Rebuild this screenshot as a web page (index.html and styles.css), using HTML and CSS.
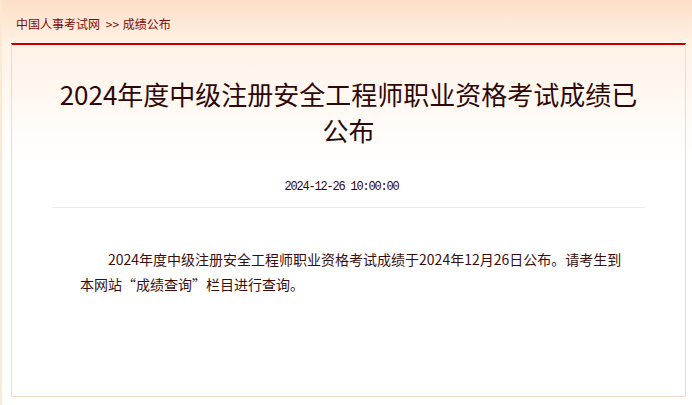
FILE: index.html
```html
<!DOCTYPE html>
<html lang="zh-CN">
<head>
  <meta charset="UTF-8">
  <meta name="viewport" content="width=device-width, initial-scale=1.0">
  <title>成绩公布</title>
  <link rel="stylesheet" href="styles.css">
</head>
<body>
  <div class="page">
    <div class="crumbs">
      <a href="#">中国人事考试网</a>
      <span class="sep">&gt;&gt;</span>
      <a href="#">成绩公布</a>
    </div>

    <div class="article">
      <div class="article-head">
        <h1>2024年度中级注册安全工程师职业资格考试成绩已公布</h1>
        <p class="date">2024-12-26 10:00:00</p>
      </div>

      <div class="article-body">
        <p>2024年度中级注册安全工程师职业资格考试成绩于2024年12月26日公布。请考生到本网站“成绩查询”栏目进行查询。</p>
      </div>
    </div>
  </div>
</body>
</html>
```

FILE: styles.css
```css
html, body {
  height: 100%;
}

body {
  margin: 0;
  padding: 0;
  font-family: 'Noto Sans CJK SC', sans-serif;
  color: #3a0d0d;
  background: #fff;
}

.page {
  box-sizing: border-box;
  min-height: 100%;
  padding: 0 6px 8px 9px;
  border-left: 2px solid #fde8d2;
  background: linear-gradient(to bottom, #fddfc6 0, #fff2e6 45px, #fff 160px);
}

.crumbs {
  height: 43px;
  padding-left: 5px;
  font-size: 12px;
  line-height: 47px;
  color: #7d0a0a;
}

.crumbs a {
  color: #7d0a0a;
  text-decoration: none;
}

.crumbs .sep {
  margin: 0 1px 0 3px;
}

.article {
  box-sizing: border-box;
  height: 354px;
  border-top: 2px solid #c00000;
  border-left: 1px solid #f3dcc4;
  border-right: 1px solid #f3dcc4;
  border-bottom: 1px solid #f0dcc8;
  padding: 0 40px;
}

.article-head {
  padding-top: 31px;
  padding-bottom: 10px;
  border-bottom: 1px solid #ededed;
  text-align: center;
}

h1 {
  margin: 0;
  font-size: 26px;
  font-weight: normal;
  line-height: 36px;
  color: #2e0808;
}

.date {
  margin: 29px 0 0;
  padding-right: 14px;
  font-family: 'Liberation Mono', monospace;
  font-size: 12px;
  letter-spacing: -1.2px;
  line-height: 20px;
  color: #3a0000;
}

.article-body {
  padding: 0 20px 0 28px;
}

.article-body p {
  margin: 39px 0 0;
  font-size: 14px;
  line-height: 25px;
  text-indent: 2em;
}
```
